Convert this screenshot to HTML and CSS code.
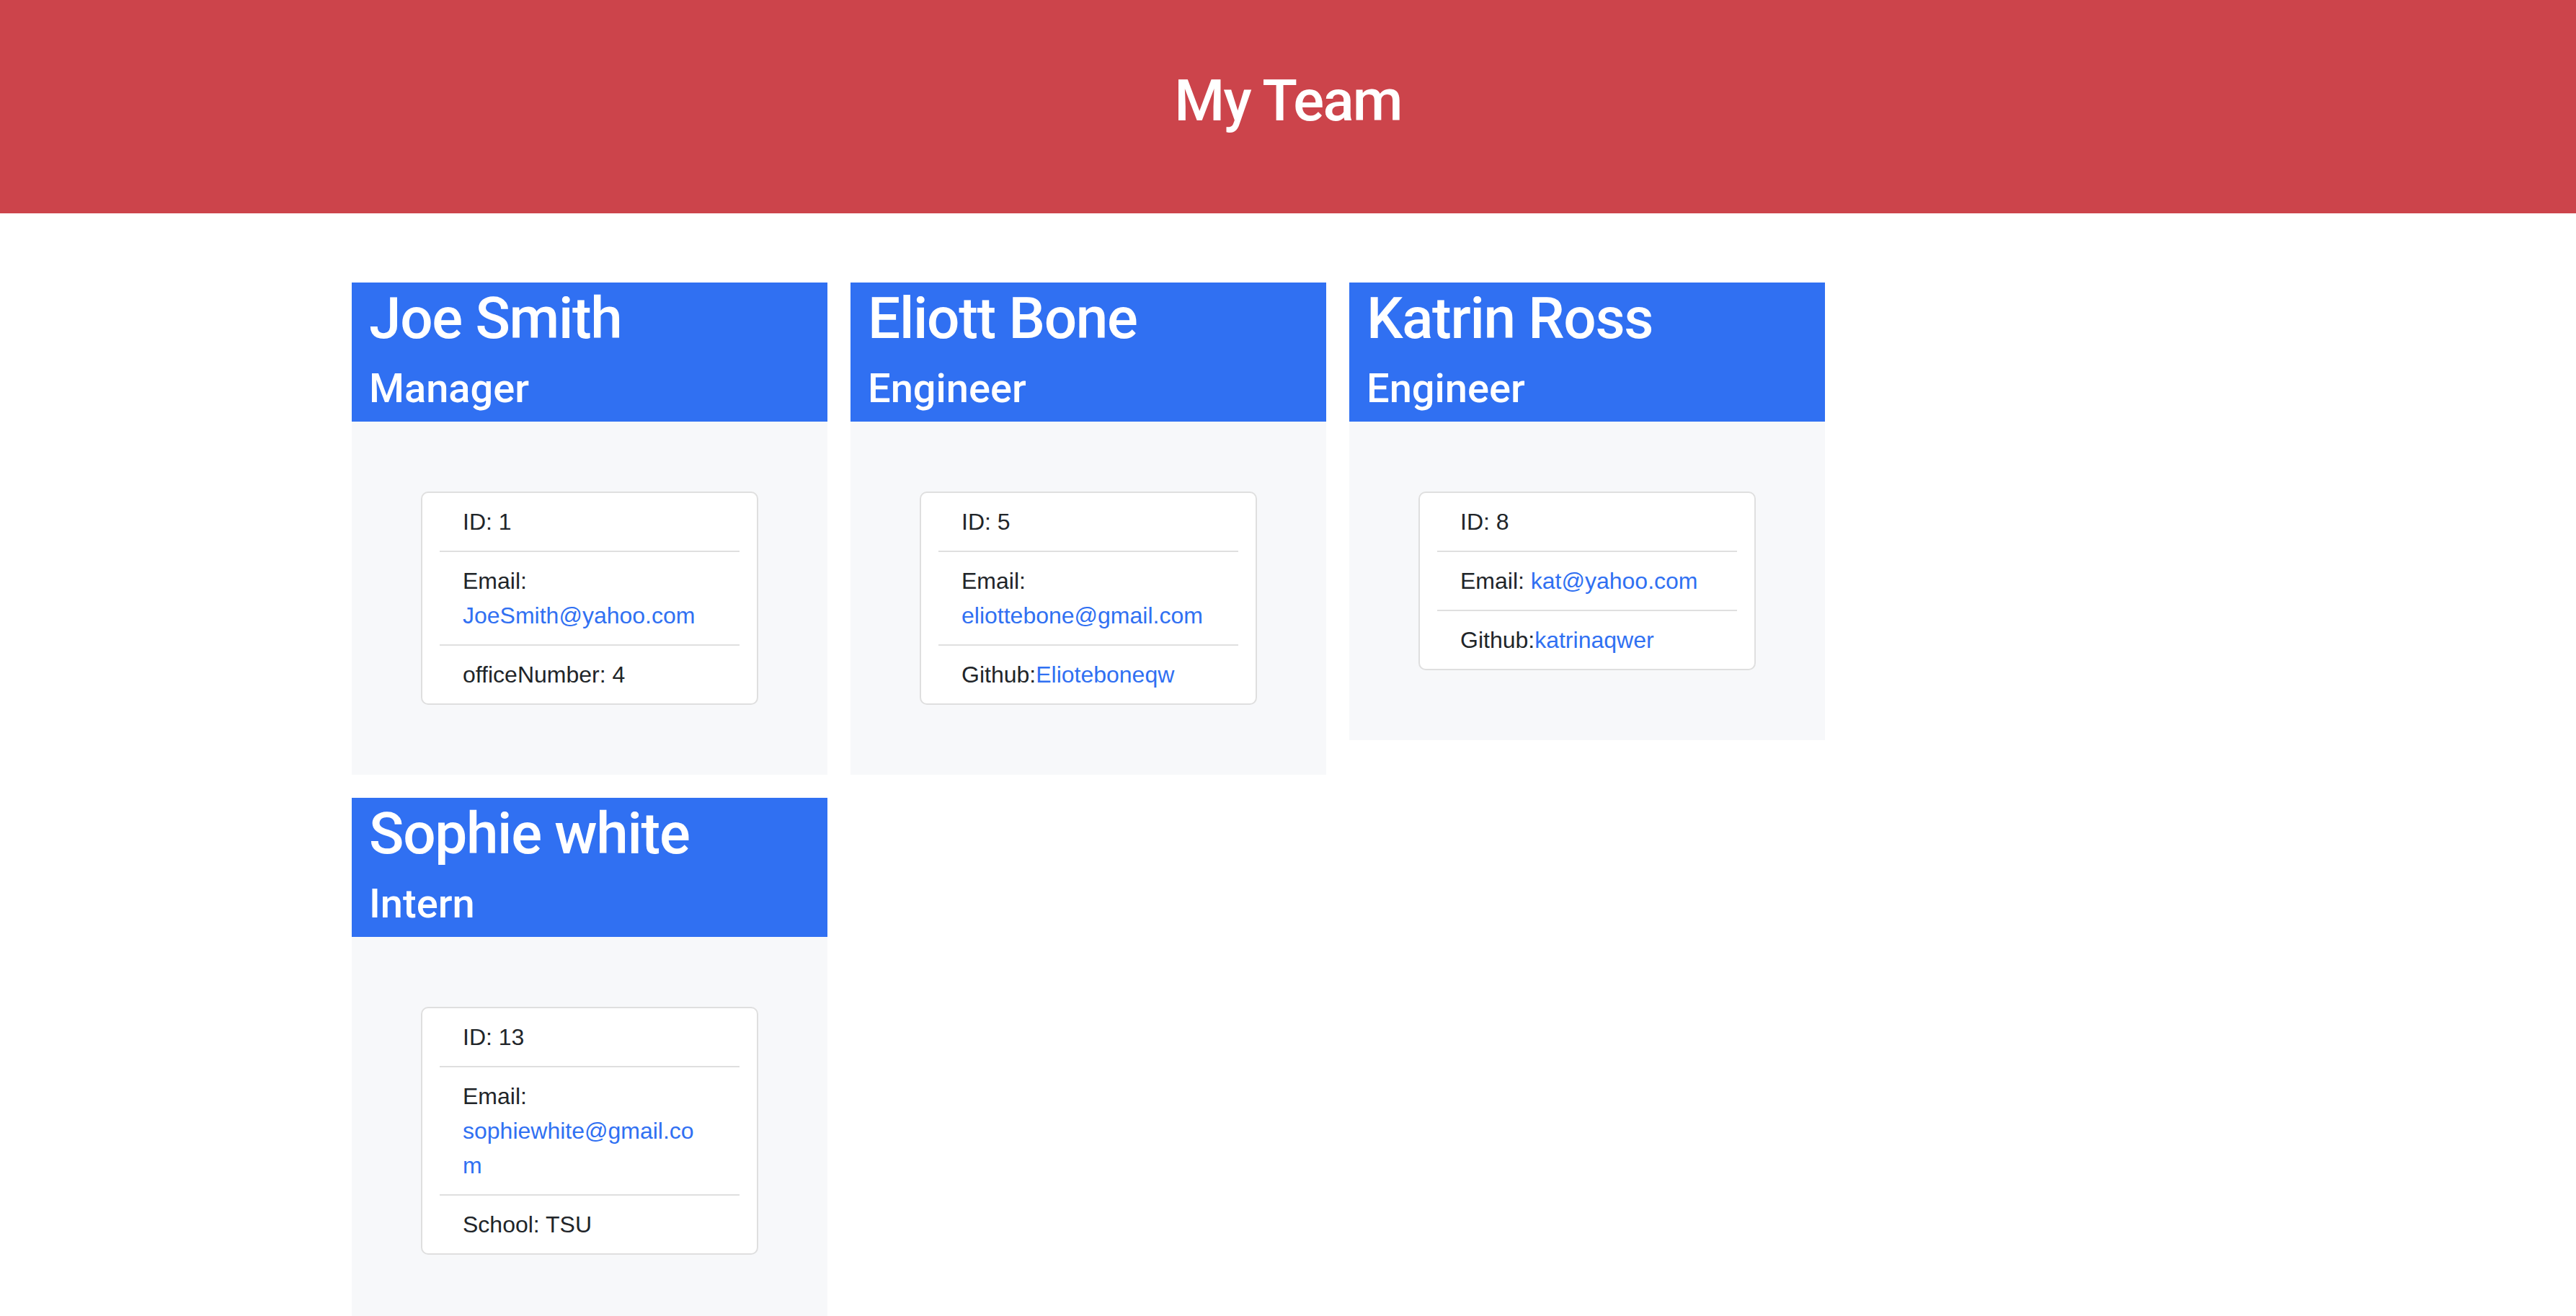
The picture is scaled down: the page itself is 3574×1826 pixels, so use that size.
FILE: index.html
```html
<!DOCTYPE html>
<html lang="en">
<head>
<meta charset="utf-8">
<title>My Team</title>
<link rel="stylesheet" href="styles.css">
</head>
<body>
<header class="banner">
  <h1 class="banner-title">My Team</h1>
</header>
<main class="team">
  <section class="member">
    <div class="member-head">
      <h2 class="member-name">Joe Smith</h2>
      <h3 class="member-role">Manager</h3>
    </div>
    <div class="member-body">
      <ul class="info">
        <li class="info-item">ID: 1</li>
        <li class="info-item">Email: <a class="info-link" href="#">JoeSmith@yahoo.com</a></li>
        <li class="info-item">officeNumber: 4</li>
      </ul>
    </div>
  </section>
  <section class="member">
    <div class="member-head">
      <h2 class="member-name">Eliott Bone</h2>
      <h3 class="member-role">Engineer</h3>
    </div>
    <div class="member-body">
      <ul class="info">
        <li class="info-item">ID: 5</li>
        <li class="info-item">Email: <a class="info-link" href="#">eliottebone@gmail.com</a></li>
        <li class="info-item">Github:<a class="info-link" href="#">Elioteboneqw</a></li>
      </ul>
    </div>
  </section>
  <section class="member">
    <div class="member-head">
      <h2 class="member-name">Katrin Ross</h2>
      <h3 class="member-role">Engineer</h3>
    </div>
    <div class="member-body">
      <ul class="info">
        <li class="info-item">ID: 8</li>
        <li class="info-item">Email: <a class="info-link" href="#">kat@yahoo.com</a></li>
        <li class="info-item">Github:<a class="info-link" href="#">katrinaqwer</a></li>
      </ul>
    </div>
  </section>
  <section class="member">
    <div class="member-head">
      <h2 class="member-name">Sophie white</h2>
      <h3 class="member-role">Intern</h3>
    </div>
    <div class="member-body">
      <ul class="info">
        <li class="info-item">ID: 13</li>
        <li class="info-item">Email: <a class="info-link" href="#">sophiewhite@gmail.com</a></li>
        <li class="info-item">School: TSU</li>
      </ul>
    </div>
  </section>
</main>
</body>
</html>
```
FILE: styles.css
```css
* { box-sizing: border-box; }

html, body {
  margin: 0;
  padding: 0;
  background: #ffffff;
}

body {
  font-family: "Liberation Sans", Arial, sans-serif;
  font-size: 32px;
  line-height: 1.5;
  color: #212529;
}

.banner {
  background: #cc444b;
  padding: 92px 0 92px;
  text-align: center;
}

.banner-title {
  margin: 0 0 16px;
  font-family: Roboto, "Liberation Sans", sans-serif;
  font-size: 80px;
  line-height: 96px;
  font-weight: 500;
  letter-spacing: -1.8px;
  color: #ffffff;
}

.team {
  max-width: 2640px;
  margin: 96px auto 0;
  padding: 0 21px;
  display: grid;
  grid-template-columns: repeat(3, 660px);
  column-gap: 32px;
  row-gap: 32px;
  align-items: start;
}

.member {
  width: 660px;
}

.member-head {
  background: #3070f2;
  color: #ffffff;
  padding: 2px 24px 0;
  font-family: Roboto, "Liberation Sans", sans-serif;
}

.member-name {
  margin: 0 0 16px;
  font-size: 80px;
  line-height: 96px;
  font-weight: 500;
  letter-spacing: -1.3px;
}

.member-role {
  margin: 0;
  padding-bottom: 12px;
  font-size: 56px;
  line-height: 67px;
  font-weight: 500;
}

.member-body {
  background: #f7f8fa;
  padding: 97px 96px 97px;
}

.info {
  list-style: none;
  margin: 0;
  padding: 0 24px;
  background: #ffffff;
  border: 2px solid #dfdfdf;
  border-radius: 10px;
}

.info-item {
  padding: 16px 40px 16px 32px;
  border-top: 2px solid #dfdfdf;
  overflow-wrap: break-word;
}

.info-item:first-child {
  border-top: 0;
}

.info-link {
  color: #3070f2;
  text-decoration: none;
}
```
